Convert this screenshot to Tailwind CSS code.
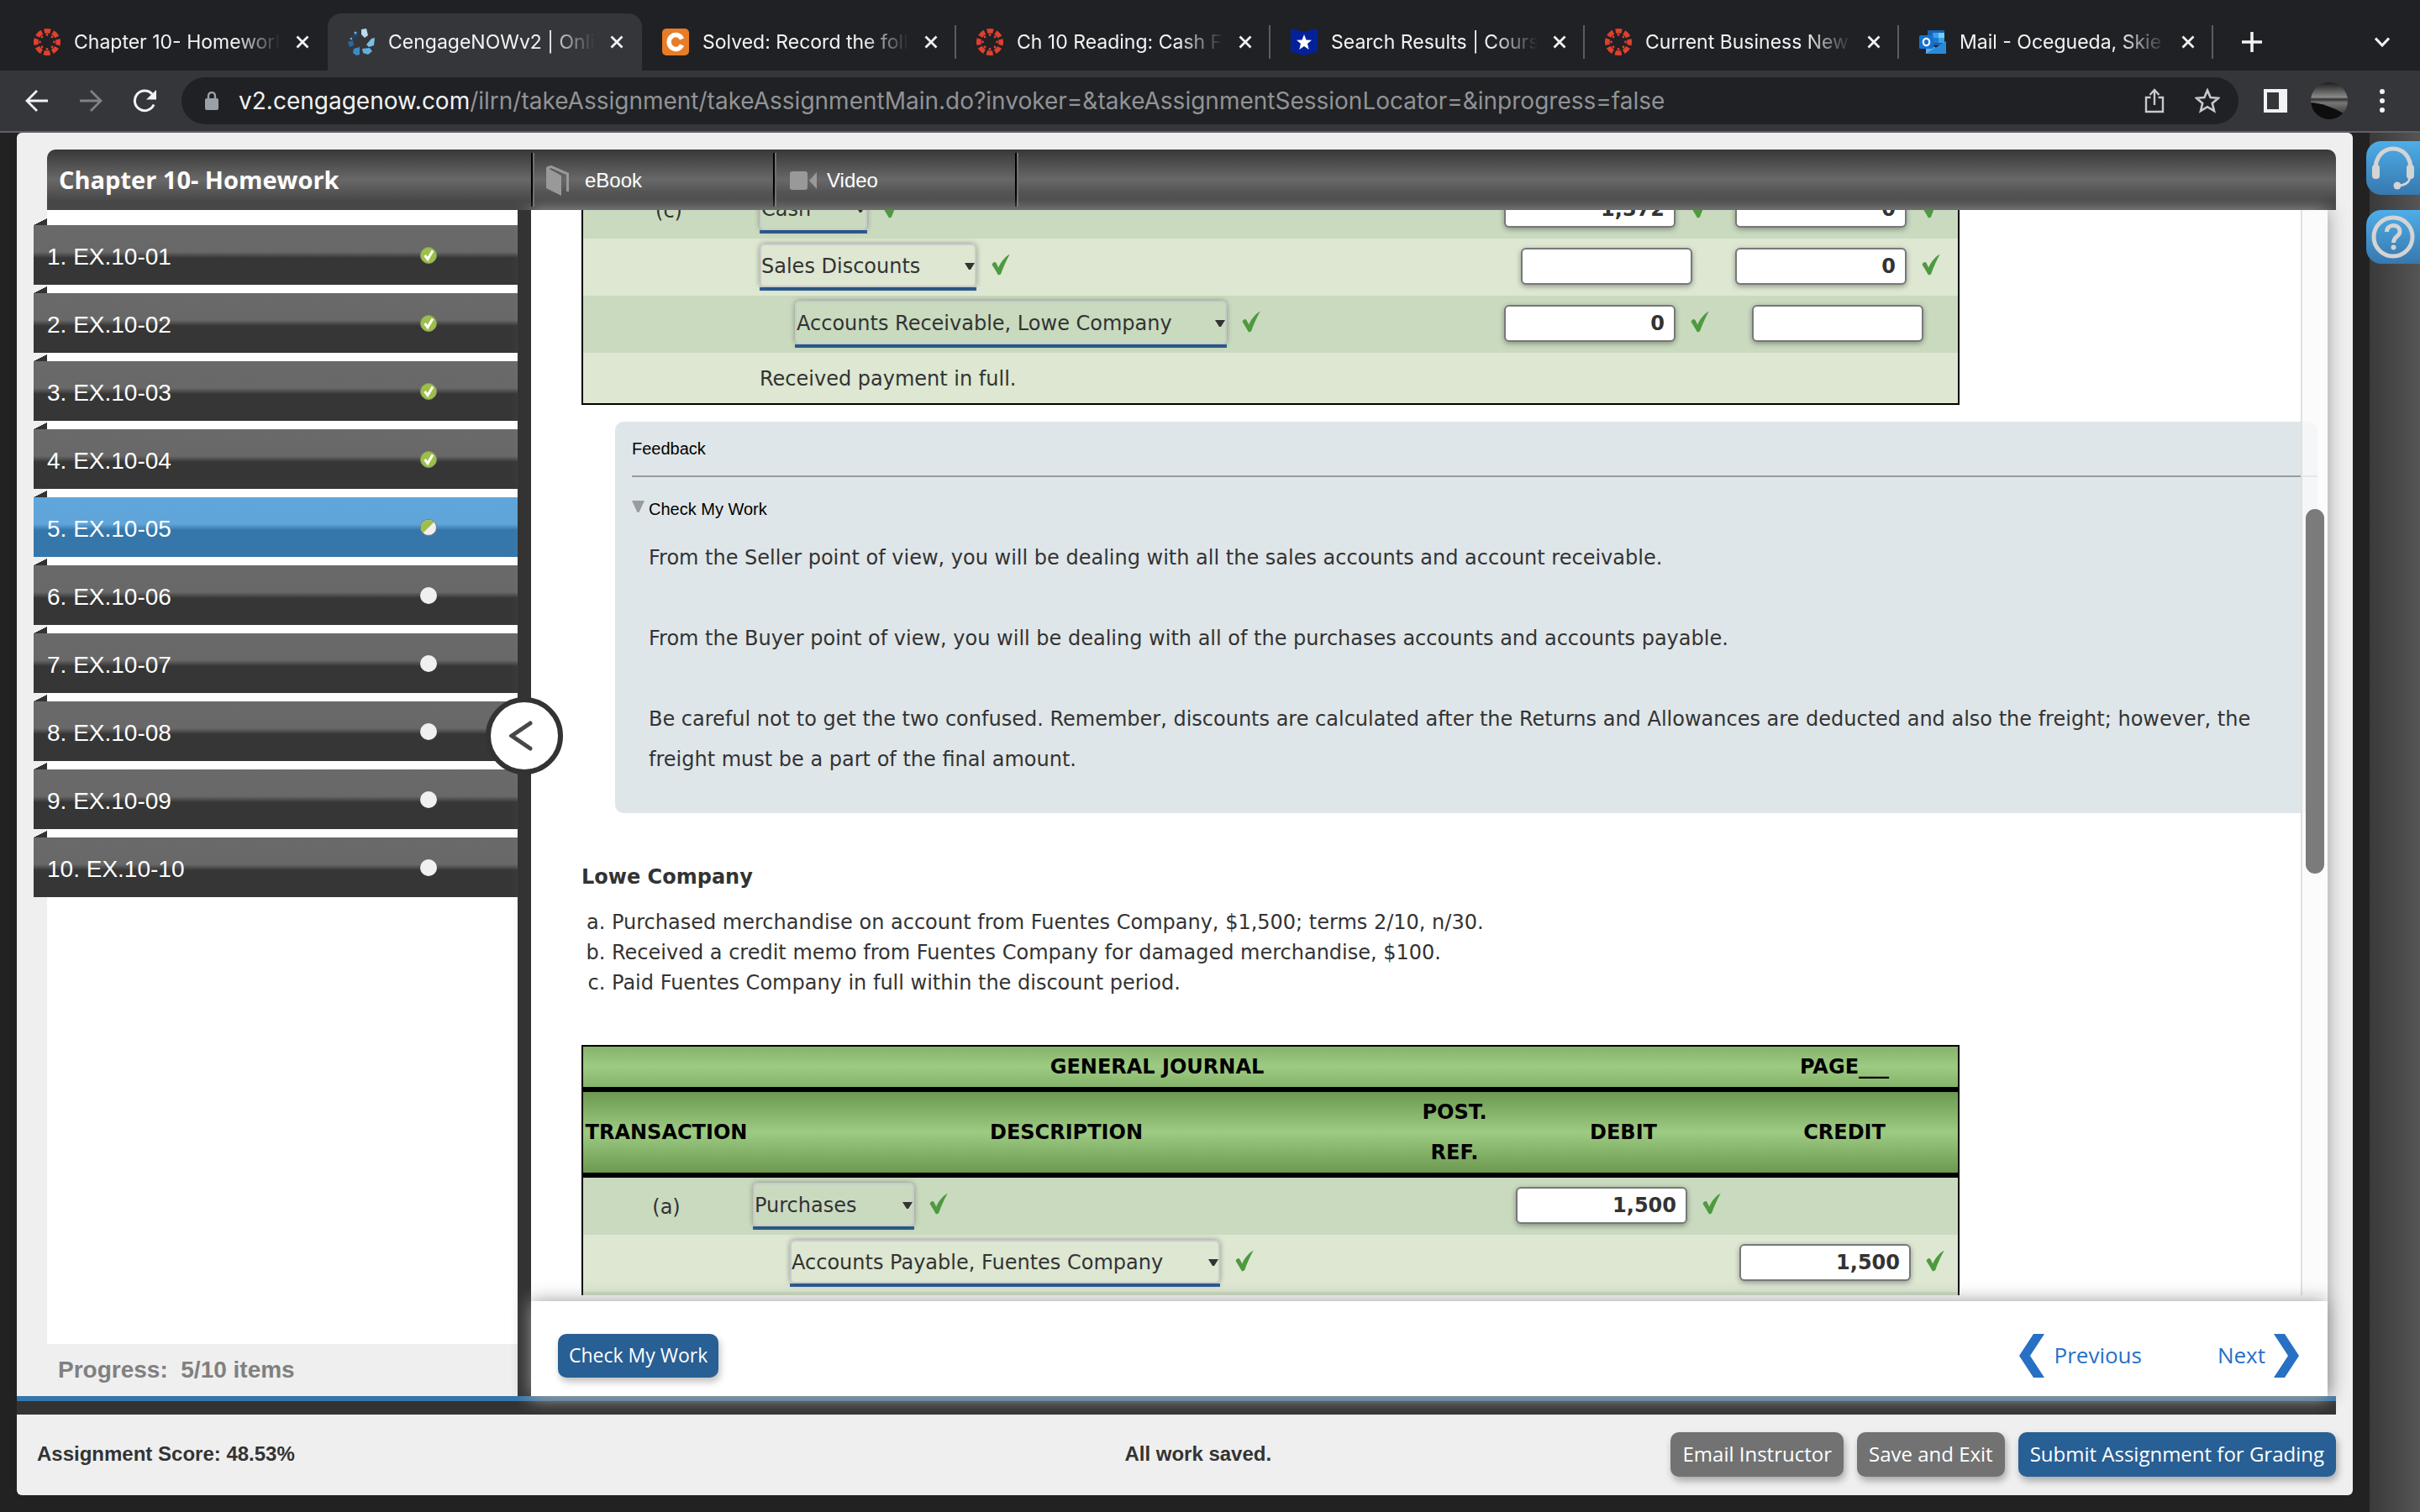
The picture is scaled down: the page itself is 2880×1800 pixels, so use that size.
<!DOCTYPE html>
<html lang="en">

<head>
    <meta charset="UTF-8">
    <meta name="viewport" content="width=device-width, initial-scale=1.0">
    <title>CengageNOWv2 | Online teaching and learning resource</title>
    <script src="https://cdn.jsdelivr.net/npm/@tailwindcss/browser@4"></script>
</head>

<body class="flex h-screen flex-col overflow-hidden bg-[#222222] font-['Liberation_Sans',sans-serif] text-[#333333]">

    <!-- shared icons -->
    <svg class="hidden">
        <symbol id="check" viewBox="0 0 22 26">
            <path d="M0.500 13 C2 9.500 4.500 9 5.800 11.500 C6.600 13.300 7.400 15 8.200 16.500 C11 10 15.500 4 21.800 0.500 C17.500 8 14 16 11 24.500 L8 25.500 C5.500 21 3 17 0.500 13 Z" fill="#4d9a3f" />
        </symbol>
        <symbol id="caret" viewBox="0 0 12 8">
            <path d="M0 0 H12 L7 8 H5 Z" fill="#333" />
        </symbol>
        <symbol id="close" viewBox="0 0 16 16">
            <path d="M1.500 1.500 L14.500 14.500 M14.500 1.500 L1.500 14.500" stroke="#f1f3f4" stroke-width="2.800" fill="none" />
        </symbol>
        <symbol id="fav-canvas" viewBox="0 0 32 32">
            <circle cx="16" cy="16" r="13.200" fill="none" stroke="#e0402f" stroke-width="5.600" stroke-dasharray="7.400 2.967" stroke-dashoffset="3.700" />
            <g fill="#e0402f">
                <circle cx="16" cy="7.500" r="1.400" /><circle cx="22" cy="10" r="1.400" />
                <circle cx="24.500" cy="16" r="1.400" /><circle cx="22" cy="22" r="1.400" />
                <circle cx="16" cy="24.500" r="1.400" /><circle cx="10" cy="22" r="1.400" />
                <circle cx="7.500" cy="16" r="1.400" /><circle cx="10" cy="10" r="1.400" />
            </g>
        </symbol>
        <symbol id="fav-cengage" viewBox="0 0 32 32">
            <path d="M16 1 L22 0 L24 8 L20 11 L16 7 Z" fill="#b9dcec" />
            <path d="M28 12 L32 11 L31 20 L25 22 L22 19 Z" fill="#7cbfe3" />
            <path d="M17 24 L26 23 L29 27 L24 31 L18 29 Z" fill="#5fb0dd" />
            <path d="M7 24 L14 22 L14 31 L10 32 L6 29 Z" fill="#3a8cc9" />
            <path d="M0 16 L6 14 L7 20 L2 22 Z" fill="#2569a6" />
            <path d="M5 8 L11 4 L13 8 L8 11 Z" fill="#1d4775" />
            <circle cx="9" cy="5" r="1.500" fill="#6fb3dc" /><circle cx="4" cy="12" r="1.300" fill="#6fb3dc" />
        </symbol>
        <symbol id="fav-chegg" viewBox="0 0 32 32">
            <rect width="32" height="32" rx="5" fill="#e87c27" />
            <path d="M23.500 12.500 A8 8.500 0 1 0 23.500 19.500" fill="none" stroke="#fff" stroke-width="5.500" />
        </symbol>
        <symbol id="fav-star" viewBox="0 0 32 32">
            <path d="M0 0 L16 4 L32 0 V27 L16 32 L0 27 Z" fill="#04219b" />
            <path d="M16 7 L18.500 13.500 L25 13.800 L20 18 L21.700 25 L16 21 L10.300 25 L12 18 L7 13.800 L13.500 13.500 Z" fill="#fff" />
        </symbol>
        <symbol id="fav-outlook" viewBox="0 0 32 32">
            <rect x="10" y="2" width="20" height="18" fill="#1a5fb4" />
            <rect x="16" y="5" width="7" height="6" fill="#3aa0e8" /><rect x="23" y="5" width="7" height="6" fill="#6fd0fb" />
            <rect x="16" y="11" width="7" height="6" fill="#1f78cf" /><rect x="23" y="11" width="7" height="6" fill="#3aa0e8" />
            <path d="M8 15 L20 23 L32 15 V30 H8 Z" fill="#54aeea" />
            <path d="M8 30 L32 15 V30 Z" fill="#2a8ada" />
            <rect y="8" width="17" height="16" rx="1.500" fill="#1573cf" />
            <ellipse cx="8.500" cy="16" rx="3.700" ry="4.200" fill="none" stroke="#fff" stroke-width="2.200" />
        </symbol>
    </svg>

    <!-- browser tabs -->
    <header class="shrink-0 font-['Inter',sans-serif]">
        <div class="flex h-[84px] items-end bg-[#202124] pl-4">
            <div id="tabs" class="flex h-[68px]"></div>
            <button aria-label="New tab" class="flex h-[68px] w-[92px] items-center justify-center">
                <svg class="size-6" viewBox="0 0 24 24" fill="none" stroke="#f1f3f4" stroke-width="3.500"><path d="M12 0 V24 M0 12 H24" /></svg>
            </button>
            <button aria-label="Search tabs" class="mr-9 ml-auto flex h-[68px] items-center">
                <svg class="h-3 w-[18px]" viewBox="0 0 18 12" fill="none" stroke="#f1f3f4" stroke-width="3"><path d="M1 1.500 L9 10 L17 1.500" /></svg>
            </button>
        </div>

        <!-- toolbar -->
        <div class="flex h-[74px] items-center border-b-2 border-[#606164] bg-[#35363a] pl-[30px]">
            <button aria-label="Back"><svg class="size-7" viewBox="0 0 28 28" fill="none" stroke="#f1f3f4" stroke-width="2.800"><path d="M27 14 H3 M14 2 L2 14 L14 26" /></svg></button>
            <button aria-label="Forward" class="ml-9"><svg class="size-7" viewBox="0 0 28 28" fill="none" stroke="#808286" stroke-width="2.800"><path d="M1 14 H25 M14 2 L26 14 L14 26" /></svg></button>
            <button aria-label="Reload" class="ml-9">
                <svg class="size-7" viewBox="0 0 28 28"><path d="M25 18.500 A11.800 11.800 0 1 1 23 6" fill="none" stroke="#f1f3f4" stroke-width="3" /><path d="M28 1 V12.500 H16 Z" fill="#f1f3f4" /></svg>
            </button>
            <div class="ml-[30px] flex h-14 flex-1 items-center rounded-full bg-[#202124] pr-[22px] pl-7">
                <svg class="h-[22px] w-4" viewBox="0 0 16 22"><rect y="8" width="16" height="14" rx="2" fill="#9aa0a6" /><path d="M4 9 V5 A4 4 0 0 1 12 5 V9" fill="none" stroke="#9aa0a6" stroke-width="2.400" /></svg>
                <div role="textbox" aria-label="Address" class="ml-6 flex-1 text-[28px] leading-9 text-[#919396]"><span class="text-[#f1f3f4]">v2.cengagenow.com</span>/ilrn/takeAssignment/takeAssignmentMain.do?invoker=&amp;takeAssignmentSessionLocator=&amp;inprogress=false</div>
                <button aria-label="Share"><svg class="h-[30px] w-6" viewBox="0 0 24 30" fill="none" stroke="#c7c9cc" stroke-width="2.400"><path d="M7.500 11 H2 V28 H22 V11 H16.500 M12 20 V2.500 M6.500 8 L12 2 L17.500 8" /></svg></button>
                <button aria-label="Bookmark" class="ml-9"><svg class="size-[30px]" viewBox="0 0 30 30" fill="none" stroke="#c7c9cc" stroke-width="2.600"><path d="M15 2.500 L18.600 11 L28 11.800 L20.800 18 L23 27 L15 22.200 L7 27 L9.200 18 L2 11.800 L11.400 11 Z" /></svg></button>
            </div>
            <button aria-label="Side panel" class="ml-[30px]"><svg class="size-7" viewBox="0 0 28 28"><path d="M0 0 H28 V28 H0 Z M4 4 V24 H18 V4 Z" fill="#f1f3f4" fill-rule="evenodd" /></svg></button>
            <button aria-label="Profile" class="ml-7">
                <svg class="size-11" viewBox="0 0 44 44">
                    <defs>
                        <linearGradient id="sky" x2="0" y2="1"><stop offset="0" stop-color="#1c1c1c" /><stop offset=".4" stop-color="#8a8a8a" /><stop offset=".46" stop-color="#333" /><stop offset=".55" stop-color="#777" /><stop offset="1" stop-color="#222" /></linearGradient>
                        <clipPath id="round"><circle cx="22" cy="22" r="22" /></clipPath>
                    </defs>
                    <g clip-path="url(#round)"><rect width="44" height="44" fill="url(#sky)" /><path d="M0 24 C12 25 24 28 44 40 V44 H0 Z" fill="#0d0d0d" /></g>
                </svg>
            </button>
            <button aria-label="Menu" class="mr-[42px] ml-[38px]"><svg class="h-7 w-1.5" viewBox="0 0 6 28" fill="#f1f3f4"><circle cx="3" cy="3" r="3" /><circle cx="3" cy="14" r="3" /><circle cx="3" cy="25" r="3" /></svg></button>
        </div>
    </header>

    <div class="flex min-h-0 flex-1">
        <div class="mx-5 mb-5 flex min-w-0 flex-1 flex-col rounded-md bg-[#efefef]">

            <!-- assignment header -->
            <div class="mt-5 mr-5 ml-9 flex h-[72px] shrink-0 items-center rounded-t-[10px] bg-[linear-gradient(#383838,#686868_50%,#474747_85%,#474747)] text-white">
                <h1 class="w-[576px] pl-3.5 font-['Open_Sans',sans-serif] text-[29px] leading-9 font-bold">Chapter 10- Homework</h1>
                <a href="#" class="flex h-16 w-72 items-center border-l-2 border-black pt-0.5 pl-4 text-2xl shadow-[inset_2px_0_#707070]">
                    <svg class="h-9 w-7" viewBox="0 0 28 36"><path d="M0 2 L18 12 V36 L0 27 Z" fill="#999" /><path d="M1 3 L6 1.500 L25.500 10 V31" fill="none" stroke="#999" stroke-width="3" /></svg>
                    <span class="ml-[18px]">eBook</span>
                </a>
                <a href="#" class="flex h-16 w-72 items-center border-l-2 border-black pt-0.5 pl-[18px] text-2xl shadow-[inset_2px_0_#707070]">
                    <svg class="h-[22px] w-8" viewBox="0 0 32 22"><rect width="21" height="22" rx="3" fill="#999" /><path d="M23 11 L32 1 V21 Z" fill="#999" /></svg>
                    <span class="ml-3">Video</span>
                </a>
                <div class="h-16 w-1 border-l-2 border-black bg-[#707070]"></div>
            </div>

            <div class="mr-5 flex min-h-0 flex-1">
                <!-- question list -->
                <nav class="flex w-[596px] shrink-0 flex-col pl-9">
                    <div class="flex-1 bg-white pt-2.5">
                        <ul id="questions" class="-ml-4 flex flex-col gap-0.5"></ul>
                    </div>
                    <p class="h-[62px] pl-[13px] text-[28px] leading-[62px] font-bold text-[#808080]">Progress:&nbsp; 5/10 items</p>
                </nav>
                <div class="relative z-10 flex w-4 shrink-0 justify-center bg-[#333333]">
                    <button aria-label="Collapse question list" class="absolute top-[580px] z-30 flex size-[92px] items-center justify-center rounded-full border-[6px] border-[#333333] bg-white pr-2">
                        <svg class="h-9 w-7" viewBox="0 0 28 36" fill="none" stroke="#484848" stroke-width="5" stroke-linecap="round"><path d="M25 3 L3 18 L25 33" /></svg>
                    </button>
                </div>

                <main class="relative mr-2.5 flex min-w-0 flex-1 flex-col bg-white shadow-[0_0_20px_#999999]">
                    <div class="relative mb-[7px] min-h-0 flex-1 overflow-hidden pl-[60px] font-['DejaVu_Sans',sans-serif] text-2xl">

                        <!-- Fuentes Company journal, scrolled partly out of view -->
                        <div class="-mt-[34px] w-[1640px] border-x-2 border-b-2 border-black">
                            <table class="w-full table-fixed border-separate border-spacing-0">
                                <colgroup>
                                    <col class="w-[204px]"><col><col class="w-[158px]"><col class="w-[276px]"><col class="w-[280px]">
                                </colgroup>
                                <tbody>
                                    <tr class="h-[68px] bg-[#c9dabf]">
                                        <td class="pt-0.5 text-center">(c)</td>
                                        <td class="pl-1.5">
                                            <div class="flex items-center gap-[18px]">
                                                <div class="relative w-32 border-b-4 border-[#2e6095]">
                                                    <select aria-label="Transaction c, line 1" class="block h-[52px] w-full appearance-none rounded-md border-2 border-[#c9cacd] pt-0.5 shadow-[0_0_6px_rgba(0,0,0,0.35)]"><option>Cash</option></select>
                                                    <svg class="pointer-events-none absolute top-[23px] right-0.5 h-2 w-3"><use href="#caret" /></svg>
                                                </div>
                                                <svg class="mb-1.5 h-[26px] w-[22px] shrink-0"><use href="#check" /></svg>
                                            </div>
                                        </td>
                                        <td></td>
                                        <td class="pb-0.5">
                                            <div class="flex items-center justify-center gap-[18px]">
                                                <input aria-label="Debit c1" value="1,372" class="h-11 w-[204px] shrink-0 rounded-md border-2 border-[#77787a] bg-white px-[11px] text-right font-bold shadow-[0_2px_6px_rgba(0,0,0,0.35)]">
                                                <svg class="mb-1 h-[26px] w-[22px] shrink-0"><use href="#check" /></svg>
                                            </div>
                                        </td>
                                        <td class="pr-1.5 pb-0.5">
                                            <div class="flex items-center justify-center gap-[18px]">
                                                <input aria-label="Credit c1" value="0" class="h-11 w-[204px] shrink-0 rounded-md border-2 border-[#77787a] bg-white px-[11px] text-right font-bold shadow-[0_2px_6px_rgba(0,0,0,0.35)]">
                                                <svg class="mb-1 h-[26px] w-[22px] shrink-0"><use href="#check" /></svg>
                                            </div>
                                        </td>
                                    </tr>
                                    <tr class="h-[68px] bg-[#dde7d1]">
                                        <td></td>
                                        <td class="pl-1.5">
                                            <div class="flex items-center gap-[18px]">
                                                <div class="relative w-[258px] border-b-4 border-[#2e6095]">
                                                    <select aria-label="Transaction c, line 2" class="block h-[52px] w-full appearance-none rounded-md border-2 border-[#c9cacd] pt-0.5 shadow-[0_0_6px_rgba(0,0,0,0.35)]"><option>Sales Discounts</option></select>
                                                    <svg class="pointer-events-none absolute top-[23px] right-0.5 h-2 w-3"><use href="#caret" /></svg>
                                                </div>
                                                <svg class="mb-1.5 h-[26px] w-[22px] shrink-0"><use href="#check" /></svg>
                                            </div>
                                        </td>
                                        <td></td>
                                        <td class="pb-0.5">
                                            <div class="flex items-center justify-center">
                                                <input aria-label="Debit c2" class="h-11 w-[204px] shrink-0 rounded-md border-2 border-[#77787a] bg-white px-[11px] text-right font-bold shadow-[0_2px_6px_rgba(0,0,0,0.35)]">
                                            </div>
                                        </td>
                                        <td class="pr-1.5 pb-0.5">
                                            <div class="flex items-center justify-center gap-[18px]">
                                                <input aria-label="Credit c2" value="0" class="h-11 w-[204px] shrink-0 rounded-md border-2 border-[#77787a] bg-white px-[11px] text-right font-bold shadow-[0_2px_6px_rgba(0,0,0,0.35)]">
                                                <svg class="mb-1 h-[26px] w-[22px] shrink-0"><use href="#check" /></svg>
                                            </div>
                                        </td>
                                    </tr>
                                    <tr class="h-[68px] bg-[#c9dabf]">
                                        <td></td>
                                        <td class="pl-12">
                                            <div class="flex items-center gap-[18px]">
                                                <div class="relative w-[514px] border-b-4 border-[#2e6095]">
                                                    <select aria-label="Transaction c, line 3" class="block h-[52px] w-full appearance-none rounded-md border-2 border-[#c9cacd] pt-0.5 shadow-[0_0_6px_rgba(0,0,0,0.35)]"><option>Accounts Receivable, Lowe Company</option></select>
                                                    <svg class="pointer-events-none absolute top-[23px] right-0.5 h-2 w-3"><use href="#caret" /></svg>
                                                </div>
                                                <svg class="mb-1.5 h-[26px] w-[22px] shrink-0"><use href="#check" /></svg>
                                            </div>
                                        </td>
                                        <td></td>
                                        <td class="pb-0.5">
                                            <div class="flex items-center justify-center gap-[18px]">
                                                <input aria-label="Debit c3" value="0" class="h-11 w-[204px] shrink-0 rounded-md border-2 border-[#77787a] bg-white px-[11px] text-right font-bold shadow-[0_2px_6px_rgba(0,0,0,0.35)]">
                                                <svg class="mb-1 h-[26px] w-[22px] shrink-0"><use href="#check" /></svg>
                                            </div>
                                        </td>
                                        <td class="pr-1.5 pb-0.5">
                                            <div class="flex items-center justify-center">
                                                <input aria-label="Credit c3" class="h-11 w-[204px] shrink-0 rounded-md border-2 border-[#77787a] bg-white px-[11px] text-right font-bold shadow-[0_2px_6px_rgba(0,0,0,0.35)]">
                                            </div>
                                        </td>
                                    </tr>
                                    <tr class="h-[60px] bg-[#dde7d1]">
                                        <td></td>
                                        <td class="pt-0.5 pl-1.5" colspan="4">Received payment in full.</td>
                                    </tr>
                                </tbody>
                            </table>
                        </div>

                        <!-- feedback -->
                        <section class="mt-5 mr-3 ml-10 rounded-[10px] bg-[#dfe6e9] pt-5 pb-10 pl-5">
                            <h2 class="border-b-2 border-[#969b9e] pb-5 font-['Liberation_Sans',sans-serif] text-xl leading-6 text-black">Feedback</h2>
                            <button class="mt-[26px] flex h-6 items-start gap-[5px] font-['Liberation_Sans',sans-serif] text-xl leading-6 text-black">
                                <svg class="mt-0.5 h-3.5 w-[15px]" viewBox="0 0 15 14"><path d="M0 0 H15 L8.500 14 H6.500 Z" fill="#979c9f" /></svg>
                                Check My Work
                            </button>
                            <div class="mt-[22px] flex flex-col gap-12 pr-10 pl-5 leading-[48px]">
                                <p>From the Seller point of view, you will be dealing with all the sales accounts and account receivable.</p>
                                <p>From the Buyer point of view, you will be dealing with all of the purchases accounts and accounts payable.</p>
                                <p>Be careful not to get the two confused. Remember, discounts are calculated after the Returns and Allowances are deducted and also the freight; however, the freight must be a part of the final amount.</p>
                            </div>
                        </section>

                        <h2 class="mt-[58px] leading-9 font-bold">Lowe Company</h2>
                        <ol class="mt-[18px] list-[lower-alpha] pl-9 leading-9">
                            <li>Purchased merchandise on account from Fuentes Company, $1,500; terms 2/10, n/30.</li>
                            <li>Received a credit memo from Fuentes Company for damaged merchandise, $100.</li>
                            <li>Paid Fuentes Company in full within the discount period.</li>
                        </ol>

                        <!-- Lowe Company journal -->
                        <div class="mt-14 w-[1640px] border-2 border-black">
                            <table class="w-full table-fixed border-separate border-spacing-0">
                                <colgroup>
                                    <col class="w-[198px]"><col><col class="w-[158px]"><col class="w-[252px]"><col class="w-[270px]">
                                </colgroup>
                                <thead class="leading-[48px] text-black">
                                    <tr class="h-[54px] bg-[linear-gradient(#86b36a,#9ecb83_44%,#86b36a_89%)]">
                                        <th colspan="4" class="border-b-[6px] border-black">GENERAL JOURNAL</th>
                                        <th class="border-b-[6px] border-black">PAGE___</th>
                                    </tr>
                                    <tr class="h-[102px] bg-[linear-gradient(#6c994f,#9ecb83_47%,#6c994f_94%)]">
                                        <th class="border-b-[6px] border-black">TRANSACTION</th>
                                        <th class="border-b-[6px] border-black pr-1">DESCRIPTION</th>
                                        <th class="border-b-[6px] border-black pl-1">POST.<br>REF.</th>
                                        <th class="border-b-[6px] border-black pr-1">DEBIT</th>
                                        <th class="border-b-[6px] border-black">CREDIT</th>
                                    </tr>
                                </thead>
                                <tbody>
                                    <tr class="h-[68px] bg-[#c9dabf]">
                                        <td class="pt-0.5 text-center">(a)</td>
                                        <td class="pl-1">
                                            <div class="flex items-center gap-[18px]">
                                                <div class="relative w-48 border-b-4 border-[#2e6095]">
                                                    <select aria-label="Transaction a, line 1" class="block h-[52px] w-full appearance-none rounded-md border-2 border-[#c9cacd] pt-0.5 shadow-[0_0_6px_rgba(0,0,0,0.35)]"><option>Purchases</option></select>
                                                    <svg class="pointer-events-none absolute top-[23px] right-0.5 h-2 w-3"><use href="#caret" /></svg>
                                                </div>
                                                <svg class="mb-1.5 h-[26px] w-[22px] shrink-0"><use href="#check" /></svg>
                                            </div>
                                        </td>
                                        <td></td>
                                        <td class="pr-4 pb-0.5">
                                            <div class="flex items-center justify-center gap-[18px]">
                                                <input aria-label="Debit a1" value="1,500" class="h-11 w-[204px] shrink-0 rounded-md border-2 border-[#77787a] bg-white px-[11px] text-right font-bold shadow-[0_2px_6px_rgba(0,0,0,0.35)]">
                                                <svg class="mb-1 h-[26px] w-[22px] shrink-0"><use href="#check" /></svg>
                                            </div>
                                        </td>
                                        <td></td>
                                    </tr>
                                    <tr class="h-[68px] bg-[#dde7d1]">
                                        <td></td>
                                        <td class="pl-12">
                                            <div class="flex items-center gap-[18px]">
                                                <div class="relative w-[512px] border-b-4 border-[#2e6095]">
                                                    <select aria-label="Transaction a, line 2" class="block h-[52px] w-full appearance-none rounded-md border-2 border-[#c9cacd] pt-0.5 shadow-[0_0_6px_rgba(0,0,0,0.35)]"><option>Accounts Payable, Fuentes Company</option></select>
                                                    <svg class="pointer-events-none absolute top-[23px] right-0.5 h-2 w-3"><use href="#caret" /></svg>
                                                </div>
                                                <svg class="mb-1.5 h-[26px] w-[22px] shrink-0"><use href="#check" /></svg>
                                            </div>
                                        </td>
                                        <td></td>
                                        <td></td>
                                        <td class="pr-1.5 pb-0.5">
                                            <div class="flex items-center justify-center gap-[18px]">
                                                <input aria-label="Credit a2" value="1,500" class="h-11 w-[204px] shrink-0 rounded-md border-2 border-[#77787a] bg-white px-[11px] text-right font-bold shadow-[0_2px_6px_rgba(0,0,0,0.35)]">
                                                <svg class="mb-1 h-[26px] w-[22px] shrink-0"><use href="#check" /></svg>
                                            </div>
                                        </td>
                                    </tr>
                                    <tr class="h-[68px] bg-[#c9dabf]">
                                        <td colspan="5"></td>
                                    </tr>
                                </tbody>
                            </table>
                        </div>

                        <!-- scrollbar -->
                        <div class="absolute inset-y-0 right-0 w-8 border-l-2 border-[#e0e0e0] bg-[#fafafa]/80">
                            <div class="mx-auto mt-[356px] h-[434px] w-[22px] rounded-full bg-[#7b7b7b]"></div>
                        </div>
                    </div>

                    <div class="relative z-20 flex h-[113px] shrink-0 items-center bg-white pt-4 pr-[34px] pl-8 font-['Open_Sans',sans-serif] shadow-[0_0_20px_#999999]">
                        <button class="h-[52px] rounded-[10px] bg-[#285f94] px-[13px] text-[23px] text-white shadow-[2px_5px_8px_rgba(0,0,0,0.25)]">Check My Work</button>
                        <a href="#" class="ml-auto flex items-center gap-3 text-[26px] text-[#2770c4]">
                            <svg class="h-[52px] w-[30px]" viewBox="0 0 30 52" fill="#2770c4"><path d="M17 0 H30 L13 26 L30 52 H17 L0 26 Z" /></svg>
                            Previous
                        </a>
                        <a href="#" class="ml-[90px] flex items-center gap-2.5 text-[26px] text-[#2770c4]">
                            Next
                            <svg class="h-[52px] w-[30px]" viewBox="0 0 30 52" fill="#2770c4"><path d="M13 0 H0 L17 26 L0 52 H13 L30 26 Z" /></svg>
                        </a>
                    </div>
                </main>
            </div>

            <div class="mr-5 h-[22px] shrink-0 border-t-[6px] border-[#3477ad] bg-[#333333]"></div>

            <!-- status bar -->
            <footer class="grid h-24 shrink-0 grid-cols-[47fr_auto_46fr] items-center pr-5 pb-0.5 pl-6 text-2xl">
                <p class="font-bold">Assignment Score: 48.53%</p>
                <p class="font-bold">All work saved.</p>
                <div class="flex justify-end gap-4 font-['Open_Sans',sans-serif] text-white">
                    <button class="h-[53px] rounded-[10px] bg-[#727272] px-3.5 shadow-[2px_5px_8px_rgba(0,0,0,0.3)]">Email Instructor</button>
                    <button class="h-[53px] rounded-[10px] bg-[#727272] px-3.5 shadow-[2px_5px_8px_rgba(0,0,0,0.3)]">Save and Exit</button>
                    <button class="h-[53px] rounded-[10px] bg-[#285f94] px-3.5 shadow-[2px_5px_8px_rgba(0,0,0,0.3)]">Submit Assignment for Grading</button>
                </div>
            </footer>
        </div>

        <!-- support rail -->
        <aside class="flex w-[60px] shrink-0 flex-col items-end gap-[18px] bg-linear-to-r from-[#3a3a3a] to-[#555555] pt-2.5">
            <button aria-label="Support" class="flex h-16 w-16 items-center justify-center rounded-l-[18px] bg-linear-to-b from-[#4fade8] to-[#3778ae]">
                <svg class="size-[52px]" viewBox="0 0 52 52"><path d="M5 30 C3 -6 49 -6 47 30" fill="none" stroke="#d4d4d4" stroke-width="5" /><rect x="1" y="22" width="9" height="17" rx="4" fill="#d4d4d4" /><rect x="42" y="22" width="9" height="17" rx="4" fill="#d4d4d4" /><path d="M46 37 C45 44 40 47 31 47" fill="none" stroke="#d4d4d4" stroke-width="2.500" /><circle cx="31" cy="47" r="4.500" fill="#d4d4d4" /></svg>
            </button>
            <button aria-label="Help" class="flex h-16 w-16 items-center justify-center rounded-l-[18px] bg-linear-to-b from-[#4fade8] to-[#3778ae]">
                <svg class="size-[52px]" viewBox="0 0 52 52" fill="none" stroke="#d4d4d4" stroke-width="5"><circle cx="26" cy="26" r="23" /><path d="M18.500 20 C18.500 10 34 10 34 19.500 C34 26 26.500 25 26.500 33" /><circle cx="26.500" cy="38.500" r="3" fill="#d4d4d4" stroke="none" /></svg>
            </button>
        </aside>
    </div>

    <script>
        const tabs = [
            { icon: 'fav-canvas', title: 'Chapter 10- Homework' },
            { icon: 'fav-cengage', title: 'CengageNOWv2 | Onli', active: true },
            { icon: 'fav-chegg', title: 'Solved: Record the foll' },
            { icon: 'fav-canvas', title: 'Ch 10 Reading: Cash F' },
            { icon: 'fav-star', title: 'Search Results | Cours' },
            { icon: 'fav-canvas', title: 'Current Business New' },
            { icon: 'fav-outlook', title: 'Mail - Ocegueda, Skie' },
        ];

        document.getElementById('tabs').innerHTML = tabs.map((tab, i) => {
            const divided = !tab.active && !(tabs[i + 1] && tabs[i + 1].active);
            return `
            <div class="flex w-[374px] items-center pl-6 ${tab.active ? 'rounded-t-2xl bg-[#35363a]' : ''}">
                <svg class="size-8 shrink-0"><use href="#${tab.icon}" /></svg>
                <a href="#" class="ml-4 w-[246px] shrink-0 overflow-hidden text-[23px] leading-8 whitespace-nowrap text-[#f1f3f4] [mask-image:linear-gradient(to_right,#000_78%,transparent)]">${tab.title}</a>
                <button aria-label="Close tab" class="ml-[18px] shrink-0"><svg class="size-4"><use href="#close" /></svg></button>
                ${divided ? '<div class="ml-auto h-10 w-0.5 bg-[#5a5c60]"></div>' : ''}
            </div>`;
        }).join('');

        const icons = {
            done: '<circle cx="10" cy="10" r="9.500" fill="#9dbf4a" stroke="#8a9a68" /><path d="M5.500 10 L9 14.500 L15 4.500" fill="none" stroke="#fff" stroke-width="3" />',
            partial: '<circle cx="10" cy="10" r="9.500" fill="#f0f0f0" stroke="#777" /><path d="M3.500 16.500 A9.200 9.200 0 0 1 16.500 3.500 Z" fill="#9dbf4a" />',
            open: '<circle cx="10" cy="10" r="10" fill="#f0f0f0" />',
        };
        const status = ['done', 'done', 'done', 'done', 'partial', 'open', 'open', 'open', 'open', 'open'];

        document.getElementById('questions').innerHTML = status.map((state, i) => {
            const n = i + 1;
            const fill = state === 'partial'
                ? 'bg-[linear-gradient(#60a6da,#5fa5da_45%,#3577ab_55%)]'
                : 'bg-[linear-gradient(#6a6a6a,#686868_45%,#363636_55%)]';
            return `
            <li>
                <div class="h-2 w-4 bg-[linear-gradient(to_bottom_right,#efefef_50%,#333333_50%)]"></div>
                <a href="#" class="flex h-[71px] items-center justify-between pr-24 pl-4 text-[28px] text-white ${fill}">
                    <span class="pt-1">${n}. EX.10-${String(n).padStart(2, '0')}</span>
                    <svg class="size-5" viewBox="0 0 20 20">${icons[state]}</svg>
                </a>
            </li>`;
        }).join('');
    </script>
</body>

</html>
